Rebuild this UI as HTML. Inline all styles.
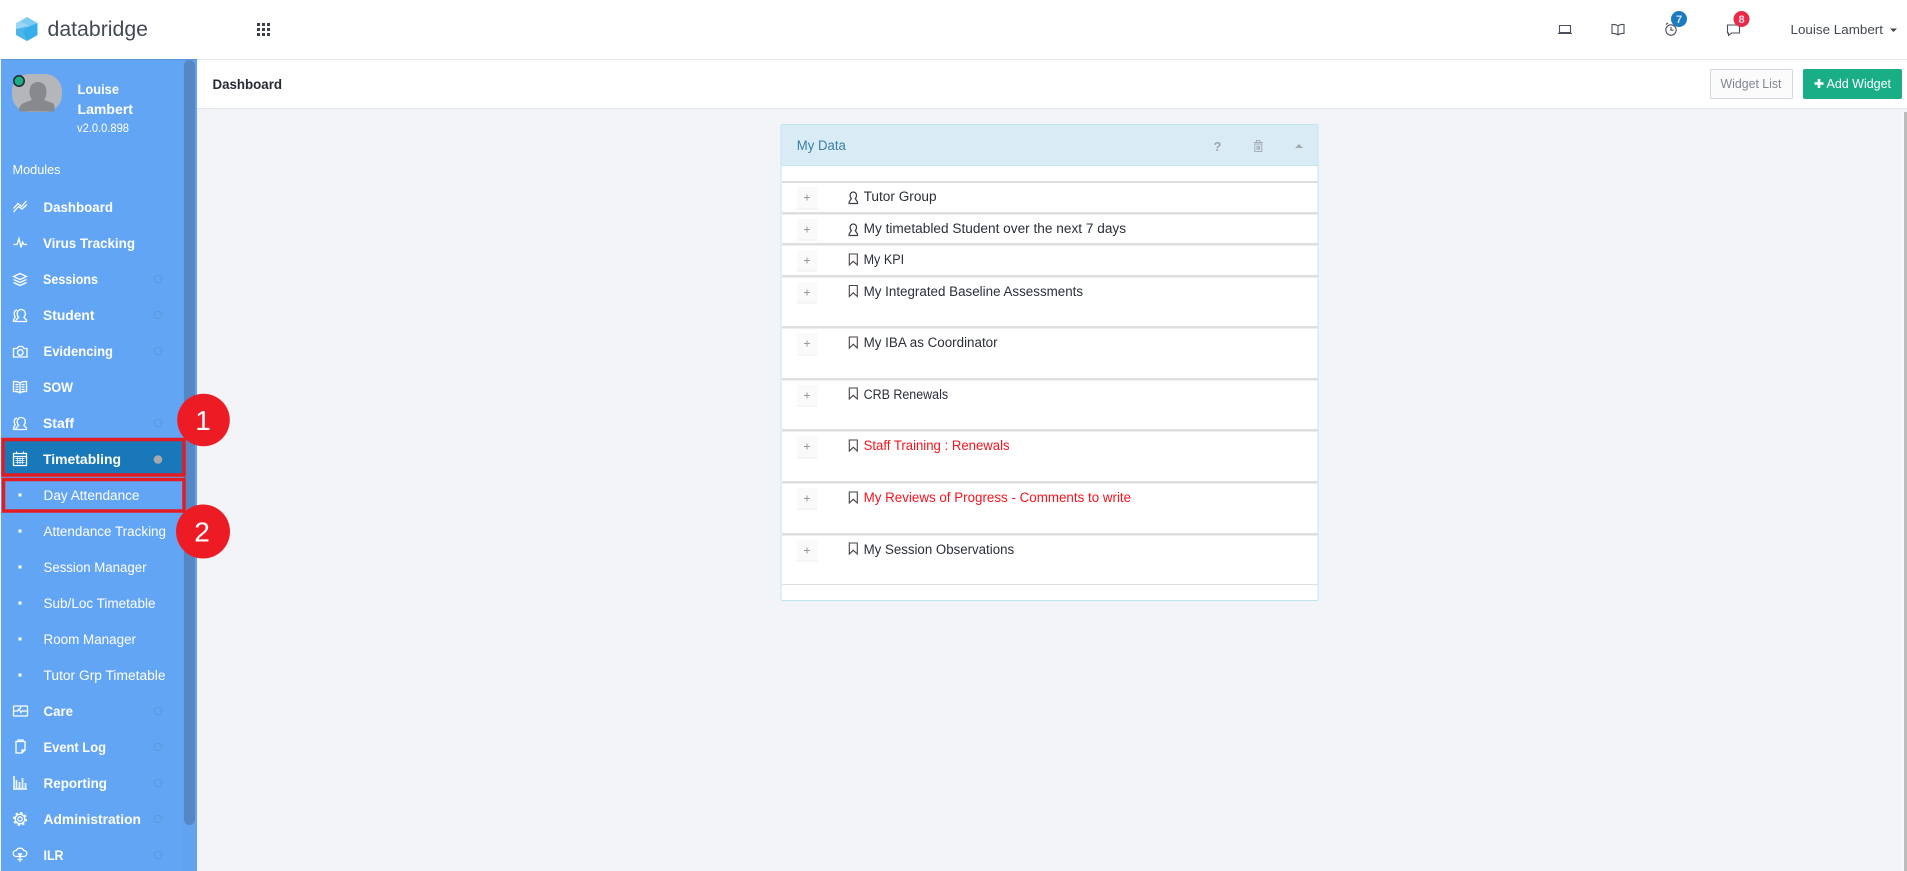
<!DOCTYPE html>
<html lang="en"><head><meta charset="utf-8"><title>databridge - Dashboard</title>
<style>
html,body{margin:0;padding:0;background:#f2f4f8;overflow:hidden}
body{width:1907px;height:871px;position:relative}
svg{position:absolute;left:0;top:0;display:block}
text{font-family:"Liberation Sans",Arial,sans-serif}
.m{font-size:13.5px;font-weight:700;fill:#fff}
.s{font-size:13.5px;fill:#fff}
.r{font-size:13.5px;fill:#2b2f3a}
.w{fill:none;stroke:#fff;stroke-width:1.3}
.d{fill:none;stroke:#4a4f5c;stroke-width:1.1}
.o{fill:none;stroke:#5e96d8;stroke-width:1}
.p{fill:#fafafa;stroke:none}
</style></head><body>
<svg width="1907" height="871" viewBox="0 0 1907 871" xmlns="http://www.w3.org/2000/svg">
<!-- page -->
<rect width="1907" height="871" fill="#f2f4f8"/>
<rect x="1902" y="112" width="5" height="759" fill="#f7f8fa"/>
<rect x="1904" y="112" width="3" height="759" fill="#bcbcbc"/>
<!-- top bar -->
<rect width="1907" height="59" fill="#fff"/>
<rect y="59" x="197" width="1710" height="1.5" fill="#e6e7e9"/>
<polygon points="27,17 37.500,23 37.500,35 27,41 16,35 16,23" fill="#9ad7f5"/>
<polygon points="27,17 37,23 30,26 21,22" fill="#7ccbf2"/>
<polygon points="37.500,23 37.500,35 27,41 22,31 30,26" fill="#36aeea"/>
<polygon points="16,29 30,26 22,31 27,41 16,35" fill="#4fb3e8"/>
<text x="47.500" y="36" font-size="21.500" fill="#434954" textLength="100.500" lengthAdjust="spacingAndGlyphs">databridge</text>
<g fill="#3b404c"><rect x="257" y="23" width="3" height="3"/><rect x="262" y="23" width="3" height="3"/><rect x="267" y="23" width="3" height="3"/><rect x="257" y="28" width="3" height="3"/><rect x="262" y="28" width="3" height="3"/><rect x="267" y="28" width="3" height="3"/><rect x="257" y="33" width="3" height="3"/><rect x="262" y="33" width="3" height="3"/><rect x="267" y="33" width="3" height="3"/></g>
<!-- top right icons -->
<path class="d" d="M1559.500 25.500h11v7h-11zM1558 33.500h14"/>
<path class="d" d="M1618 26c-1.500-1.200-3.500-1.700-6-1.500v9c2.500-.2 4.500.3 6 1.500 1.500-1.200 3.500-1.700 6-1.500v-9c-2.500-.2-4.500.3-6 1.500zM1618 26v9"/>
<circle class="d" cx="1671" cy="30" r="5.200"/><path class="d" d="M1671 27v3.200h2.500M1666 24.500l2-1.500"/>
<circle cx="1679" cy="19" r="8" fill="#1b7bbf"/><text x="1679" y="23" font-size="11" font-weight="700" fill="#cfe6f7" text-anchor="middle">7</text>
<path class="d" d="M1727.500 25h12v8h-8l-3 2.500v-2.500h-1z"/>
<circle cx="1741.500" cy="19" r="8" fill="#ea2a49"/><text x="1741.500" y="23" font-size="11" font-weight="700" fill="#ffd9e0" text-anchor="middle">8</text>
<text x="1790.500" y="34" font-size="13" fill="#434954" textLength="92.500" lengthAdjust="spacingAndGlyphs">Louise Lambert</text>
<polygon points="1890,28.500 1897,28.500 1893.500,32" fill="#444"/>
<!-- title bar -->
<rect x="197" y="60" width="1710" height="48" fill="#fff"/>
<rect x="197" y="108" width="1710" height="1" fill="#e3e6ee"/>
<text x="212.500" y="89" font-size="13.500" font-weight="700" fill="#262a35" textLength="69.500" lengthAdjust="spacingAndGlyphs">Dashboard</text>
<rect x="1710.500" y="69.500" width="82" height="29" rx="1.500" fill="#fbfbfc" stroke="#d2d7df"/>
<text x="1720.500" y="88" font-size="12.500" fill="#808690" textLength="61" lengthAdjust="spacingAndGlyphs">Widget List</text>
<rect x="1803" y="69" width="99" height="30" rx="2" fill="#1aae86"/>
<path d="M1814.500 83.500h9M1819 79v9" stroke="#fff" stroke-width="2.600" fill="none"/>
<text x="1826.500" y="88" font-size="13" fill="#fff" textLength="64.500" lengthAdjust="spacingAndGlyphs">Add Widget</text>
<!-- sidebar -->
<rect x="1" y="59" width="196" height="812" fill="#63a5f5"/>
<rect x="1" y="59" width="196" height="1" fill="#5b95dd"/>
<rect x="182" y="60" width="15" height="811" fill="#5587c5" opacity=".07"/>
<rect x="184" y="60" width="11" height="765" rx="5.500" fill="#5587c5"/>
<!-- avatar -->
<rect x="12" y="74" width="50" height="38" rx="17" fill="#b5b6b9"/>
<path d="M19 111.500c0-5 1.500-7.500 6-9l7-2.500c-1.500-2-2.500-5-2.500-8 0-6 3-10 8.500-10s8.500 4 8.500 10c0 3-1 6-2.500 8l7 2.500c4.500 1.500 3.500 4 3.500 9z" fill="#88898d"/>
<circle cx="19" cy="81" r="5.200" fill="#1aae86" stroke="#23282f" stroke-width="1.500"/>
<text class="m" x="77.500" y="94" textLength="41.500" lengthAdjust="spacingAndGlyphs">Louise</text>
<text class="m" x="77.500" y="114" textLength="55.500" lengthAdjust="spacingAndGlyphs">Lambert</text>
<text x="77" y="132" font-size="12" fill="#fff" textLength="52" lengthAdjust="spacingAndGlyphs">v2.0.0.898</text>
<text x="12.500" y="174" font-size="12.500" fill="#fff" textLength="48" lengthAdjust="spacingAndGlyphs">Modules</text>
<!-- highlighted items -->
<rect x="3" y="439.500" width="181" height="35.500" fill="#1878ba" stroke="#e31b23" stroke-width="3.500"/>
<rect x="3.500" y="479.500" width="180.500" height="31.500" fill="#63a5f5" stroke="#e31b23" stroke-width="3.500"/>
<!-- module labels -->
<text class="m" x="43.500" y="212" textLength="69.500" lengthAdjust="spacingAndGlyphs">Dashboard</text>
<text class="m" x="43" y="248" textLength="92" lengthAdjust="spacingAndGlyphs">Virus Tracking</text>
<text class="m" x="43" y="284" textLength="55" lengthAdjust="spacingAndGlyphs">Sessions</text>
<text class="m" x="43" y="320" textLength="51.500" lengthAdjust="spacingAndGlyphs">Student</text>
<text class="m" x="43.500" y="356" textLength="69.500" lengthAdjust="spacingAndGlyphs">Evidencing</text>
<text class="m" x="43" y="392" textLength="30" lengthAdjust="spacingAndGlyphs">SOW</text>
<text class="m" x="43" y="428" textLength="31" lengthAdjust="spacingAndGlyphs">Staff</text>
<text class="m" x="43" y="464" textLength="78" lengthAdjust="spacingAndGlyphs">Timetabling</text>
<text class="s" x="43.500" y="500" textLength="96" lengthAdjust="spacingAndGlyphs">Day Attendance</text>
<text class="s" x="43.500" y="536" textLength="122.500" lengthAdjust="spacingAndGlyphs">Attendance Tracking</text>
<text class="s" x="43.500" y="572" textLength="103" lengthAdjust="spacingAndGlyphs">Session Manager</text>
<text class="s" x="43.500" y="608" textLength="112" lengthAdjust="spacingAndGlyphs">Sub/Loc Timetable</text>
<text class="s" x="43.500" y="644" textLength="92.500" lengthAdjust="spacingAndGlyphs">Room Manager</text>
<text class="s" x="43.500" y="680" textLength="122" lengthAdjust="spacingAndGlyphs">Tutor Grp Timetable</text>
<text class="m" x="43.500" y="716" textLength="29.500" lengthAdjust="spacingAndGlyphs">Care</text>
<text class="m" x="43.500" y="752" textLength="62.500" lengthAdjust="spacingAndGlyphs">Event Log</text>
<text class="m" x="43.500" y="788" textLength="63.500" lengthAdjust="spacingAndGlyphs">Reporting</text>
<text class="m" x="43.500" y="824" textLength="97.500" lengthAdjust="spacingAndGlyphs">Administration</text>
<text class="m" x="43.500" y="860" textLength="20" lengthAdjust="spacingAndGlyphs">ILR</text>
<!-- bullets -->
<g fill="#fff"><rect x="18.500" y="493.500" width="3" height="3"/><rect x="18.500" y="529.500" width="3" height="3"/><rect x="18.500" y="565.500" width="3" height="3"/><rect x="18.500" y="601.500" width="3" height="3"/><rect x="18.500" y="637.500" width="3" height="3"/><rect x="18.500" y="673.500" width="3" height="3"/></g>
<!-- state circles -->
<circle class="o" cx="158" cy="279" r="3.800"/><circle class="o" cx="158" cy="315" r="3.800"/><circle class="o" cx="158" cy="351" r="3.800"/><circle class="o" cx="158" cy="423" r="3.800"/>
<circle cx="158" cy="459.500" r="4.300" fill="#a5a8ad"/>
<circle class="o" cx="158" cy="711" r="3.800"/><circle class="o" cx="158" cy="747" r="3.800"/><circle class="o" cx="158" cy="783" r="3.800"/><circle class="o" cx="158" cy="819" r="3.800"/><circle class="o" cx="158" cy="855" r="3.800"/>
<!-- module icons -->
<path class="w" d="M13.500 208.500l4.500-5 3.500 3 5-5.500M13.500 212l5-5.500 3.500 2.500 5-4.500"/>
<path class="w" d="M13.500 244.500h3.500l2-6 2 9 1.500-5.500 1.500 2.500h3"/>
<path class="w" d="M20 273.500l6.500 3-6.500 3-6.500-3zM13.500 279.500l6.500 3 6.500-3M13.500 282.500l6.500 3 6.500-3"/>
<path class="w" d="M21 309.500c-2.400 0-3.800 2-3.800 4.200 0 1.600.6 2.800 1.500 3.600l-2.700 2.700v1.500h10.500v-1.500l-2.700-2.700c.9-.8 1.500-2 1.500-3.600 0-2.200-1.400-4.200-4.300-4.200zM17 310c-2 .3-2.800 2-2.800 3.800 0 1.200.4 2.200 1 3l-1.700 3v1.500h2"/>
<path class="w" d="M13.500 348.500h3.500l1.500-2h4l1.500 2h3v8.500h-13.500z"/><circle class="w" cx="20.300" cy="352.500" r="2.800"/>
<path class="w" d="M20 383c-1.700-1.300-3.700-1.700-6.500-1.500v10c2.800-.2 4.800.2 6.500 1.500 1.700-1.300 3.700-1.700 6.500-1.500v-10c-2.800-.2-4.800.2-6.500 1.500zM20 383v10M15.500 384.500h3M15.500 387h3M15.500 389.500h3M21.500 384.500h3M21.500 387h3M21.500 389.500h3"/>
<path class="w" d="M21 417.500c-2.400 0-3.800 2-3.800 4.200 0 1.600.6 2.800 1.500 3.600l-2.700 2.700v1.500h10.500v-1.500l-2.700-2.700c.9-.8 1.500-2 1.500-3.600 0-2.200-1.400-4.200-4.300-4.200zM17 418c-2 .3-2.800 2-2.800 3.800 0 1.200.4 2.200 1 3l-1.700 3v1.500h2"/>
<path class="w" d="M13.500 453.500h13v12h-13zM13.500 456.500h13M16.500 451.500v2.500M23.500 451.500v2.500"/>
<path d="M15.500 458.500h9M15.500 460.500h9M15.500 462.500h9M17.500 457.500v6.500M20 457.500v6.500M22.500 457.500v6.500" stroke="#fff" stroke-width=".7" fill="none"/>
<path class="w" d="M14.500 706h12c.6 0 1 .4 1 1v8c0 .6-.4 1-1 1h-12c-.6 0-1-.4-1-1v-8c0-.6.4-1 1-1zM13.500 711h4l1.500-2 2 3.500 1-1.500h5M20.500 706v3"/>
<path class="w" d="M16 741.500h9v8.500l-3 3h-6zM18 741.500v-1.500h5v1.500M25 750h-3v3"/>
<path d="M14 776v13h13M16.500 789v-9M19.500 789v-7M22.500 789v-11M25.500 789v-6" stroke="#fff" stroke-width="1.800" fill="none" opacity=".85"/>
<circle class="w" cx="20" cy="819" r="2.200"/>
<circle class="w" cx="20" cy="819" r="4.800"/>
<circle cx="20" cy="819" r="6.200" fill="none" stroke="#fff" stroke-width="1.600" stroke-dasharray="2.400 2.470"/>
<path class="w" d="M16.500 856.500c-2 0-3.300-1.300-3.300-3 0-1.700 1.300-3 3-3 .6-1.500 2-2.300 3.800-2.300 1.800 0 3.200.8 3.800 2.300 1.700 0 3 1.300 3 3 0 1.700-1.300 3-3.300 3zM20 853v9M17.500 859.500h5M18 853.500l2 2 2-2"/>
<!-- number badges -->
<circle cx="203.500" cy="420" r="26.300" fill="#ed1c24"/>
<text x="203" y="430" font-size="28" fill="#fff" text-anchor="middle">1</text>
<circle cx="203" cy="531.500" r="27" fill="#ed1c24"/>
<text x="202" y="541.500" font-size="28" fill="#fff" text-anchor="middle">2</text>
<!-- panel -->
<rect x="781" y="124.500" width="537" height="476" rx="1.500" fill="#fff" stroke="#bfe6f1"/>
<path d="M781.500 125h536v40h-536z" fill="#d9ecf6"/>
<rect x="781.500" y="165" width="536" height="1" fill="#bfe6f1"/>
<text x="796.800" y="150" font-size="13.500" fill="#3a7fa6" textLength="49" lengthAdjust="spacingAndGlyphs">My Data</text>
<text x="1217.500" y="151" font-size="13" font-weight="700" fill="#a3a7ab" text-anchor="middle">?</text>
<path d="M1253.500 142.500h9.500M1256.500 142v-1.500h3.500v1.500M1254.800 144h7v7.500h-7zM1257 145.500v4.500M1258.300 145.500v4.500M1259.600 145.500v4.500" fill="none" stroke="#a6b0b6" stroke-width="1"/>
<polygon points="1295,148 1303,148 1299,144" fill="#a6abb0"/>
<!-- rows -->
<g fill="#dedede"><rect x="782" y="181" width="535.500" height="2"/><rect x="782" y="212" width="535.500" height="2.500"/><rect x="782" y="243" width="535.500" height="2.500"/><rect x="782" y="275" width="535.500" height="2.500"/><rect x="782" y="326" width="535.500" height="2.500"/><rect x="782" y="378" width="535.500" height="2.500"/><rect x="782" y="429" width="535.500" height="2.500"/><rect x="782" y="481" width="535.500" height="2.500"/><rect x="782" y="533" width="535.500" height="2.500"/><rect x="782" y="584" width="535.500" height="1"/></g>
<g class="p"><rect x="796.800" y="187" width="20.700" height="22"/><rect x="796.800" y="219" width="20.700" height="21"/><rect x="796.800" y="250" width="20.700" height="21"/><rect x="796.800" y="282" width="20.700" height="21"/><rect x="796.800" y="333" width="20.700" height="22"/><rect x="796.800" y="385" width="20.700" height="21"/><rect x="796.800" y="436" width="20.700" height="22"/><rect x="796.800" y="488" width="20.700" height="21"/><rect x="796.800" y="540" width="20.700" height="21"/></g>
<g fill="#eee"><rect x="796.800" y="208.500" width="20.700" height="1"/><rect x="796.800" y="239.500" width="20.700" height="1"/><rect x="796.800" y="270.500" width="20.700" height="1"/><rect x="796.800" y="302.500" width="20.700" height="1"/><rect x="796.800" y="354.500" width="20.700" height="1"/><rect x="796.800" y="405.500" width="20.700" height="1"/><rect x="796.800" y="457.500" width="20.700" height="1"/><rect x="796.800" y="508.500" width="20.700" height="1"/><rect x="796.800" y="560.500" width="20.700" height="1"/></g>
<path d="M804 197.500h6M807 194.500v6M804 229.500h6M807 226.500v6M804 260.500h6M807 257.500v6M804 292.500h6M807 289.500v6M804 343.500h6M807 340.500v6M804 395.500h6M807 392.500v6M804 446.500h6M807 443.500v6M804 498.500h6M807 495.500v6M804 550.500h6M807 547.500v6" stroke="#9a9a9a" stroke-width="1" fill="none"/>
<!-- row icons -->
<path d="M853.300 192c-2 0-3.200 1.700-3.200 3.500 0 1.300.5 2.400 1.300 3l-2.300 3.500v1.500h8.400v-1.500l-2.300-3.500c.8-.6 1.300-1.700 1.300-3 0-1.800-1.200-3.500-3.200-3.500z" fill="none" stroke="#3a3e48" stroke-width="1.200"/>
<path d="M853.300 224c-2 0-3.200 1.700-3.200 3.500 0 1.300.5 2.400 1.300 3l-2.300 3.500v1.500h8.400v-1.500l-2.300-3.500c.8-.6 1.300-1.700 1.300-3 0-1.800-1.200-3.500-3.200-3.500z" fill="none" stroke="#3a3e48" stroke-width="1.200"/>
<g fill="none" stroke="#4a4244" stroke-width="1.100"><path d="M849.300 254h8v11l-4-3.700-4 3.700z"/><path d="M849.300 285.500h8v11l-4-3.700-4 3.700z"/><path d="M849.300 337h8v11l-4-3.700-4 3.700z"/><path d="M849.300 388h8v11l-4-3.700-4 3.700z"/><path d="M849.300 440h8v11l-4-3.700-4 3.700z"/><path d="M849.300 492h8v11l-4-3.700-4 3.700z"/><path d="M849.300 543h8v11l-4-3.700-4 3.700z"/></g>
<!-- row labels -->
<text class="r" x="863.600" y="201" textLength="73" lengthAdjust="spacingAndGlyphs">Tutor Group</text>
<text class="r" x="863.600" y="233" textLength="262.500" lengthAdjust="spacingAndGlyphs">My timetabled Student over the next 7 days</text>
<text class="r" x="863.600" y="264" textLength="40.500" lengthAdjust="spacingAndGlyphs">My KPI</text>
<text class="r" x="863.600" y="296" textLength="219.500" lengthAdjust="spacingAndGlyphs">My Integrated Baseline Assessments</text>
<text class="r" x="863.600" y="347" textLength="134" lengthAdjust="spacingAndGlyphs">My IBA as Coordinator</text>
<text class="r" x="863.600" y="399" textLength="84.500" lengthAdjust="spacingAndGlyphs">CRB Renewals</text>
<text class="r" x="863.600" y="450" textLength="146" lengthAdjust="spacingAndGlyphs" style="fill:#f5141e">Staff Training : Renewals</text>
<text class="r" x="863.600" y="502" textLength="267.500" lengthAdjust="spacingAndGlyphs" style="fill:#f5141e">My Reviews of Progress - Comments to write</text>
<text class="r" x="863.600" y="554" textLength="150.500" lengthAdjust="spacingAndGlyphs">My Session Observations</text>
</svg>
</body></html>
